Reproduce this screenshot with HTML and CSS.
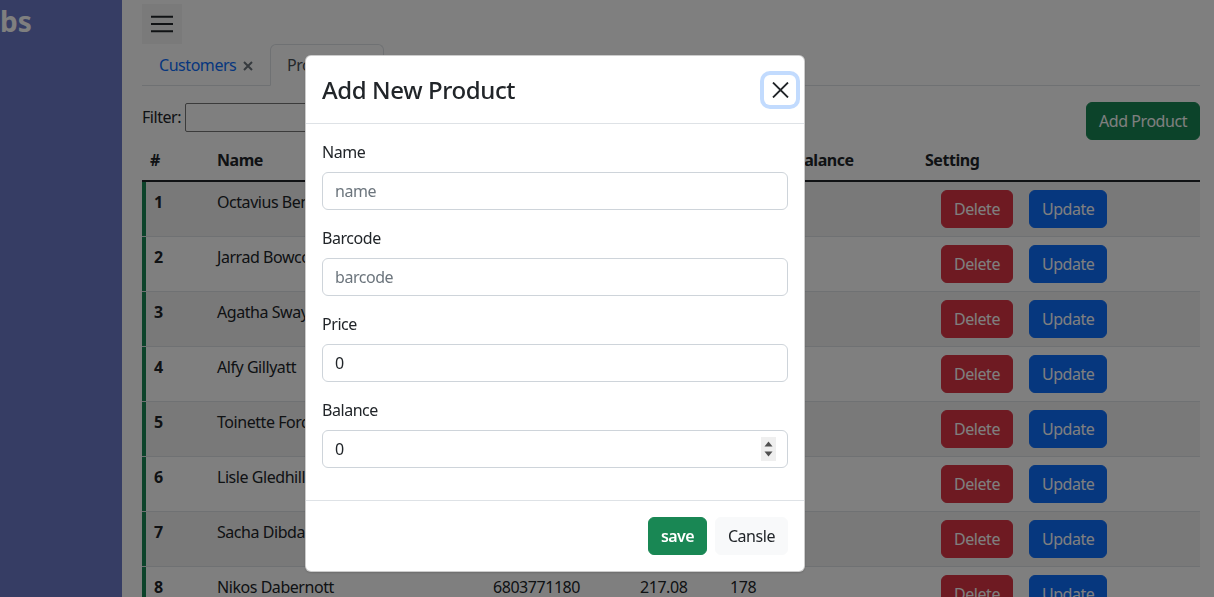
FILE: index.html
```html
<!DOCTYPE html>
<html lang="en">
<head>
<meta charset="utf-8">
<title>Products</title>
<link rel="stylesheet" href="styles.css">
</head>
<body>
<div class="app">
  <aside class="sidebar">
    <div class="brand">bs</div>
  </aside>
  <main class="main">
    <button class="hamburger" type="button" aria-label="menu">
      <svg width="40" height="40" viewBox="0 0 40 40"><path d="M9 12.7H31M9 20H31M9 27.3H31" stroke="#212529" stroke-width="2" fill="none"/></svg>
    </button>
    <ul class="tabs">
      <li class="tab"><a class="tab-link">Customers <svg class="tab-x" width="10" height="10" viewBox="0 0 10 10"><path d="M1 1L9 9M9 1L1 9" stroke="#6c757d" stroke-width="2"/></svg></a></li>
      <li class="tab"><a class="tab-link active">Products <svg class="tab-x" width="10" height="10" viewBox="0 0 10 10"><path d="M1 1L9 9M9 1L1 9" stroke="#6c757d" stroke-width="2"/></svg></a></li>
    </ul>
    <div class="toolbar">
      <div class="filter">
        <label class="filter-label" for="flt">Filter:</label>
        <input class="filter-input" id="flt" type="text">
      </div>
      <button class="btn btn-success" type="button">Add Product</button>
    </div>
    <table class="table">
      <colgroup>
        <col class="c-num"><col class="c-name"><col class="c-barcode"><col class="c-price"><col class="c-stock"><col class="c-balance"><col>
      </colgroup>
      <thead>
        <tr><th>#</th><th>Name</th><th>Barcode</th><th>Price</th><th>Stock</th><th>Balance</th><th>Setting</th></tr>
      </thead>
      <tbody>
        <tr><th>1</th><td>Octavius Benedek</td><td>4217703391</td><td>145.20</td><td>52</td><td></td><td><button class="btn btn-danger">Delete</button><button class="btn btn-primary">Update</button></td></tr>
        <tr><th>2</th><td>Jarrad Bowcock</td><td>5571882046</td><td>88.45</td><td>310</td><td></td><td><button class="btn btn-danger">Delete</button><button class="btn btn-primary">Update</button></td></tr>
        <tr><th>3</th><td>Agatha Swaysland</td><td>0938145562</td><td>402.10</td><td>17</td><td></td><td><button class="btn btn-danger">Delete</button><button class="btn btn-primary">Update</button></td></tr>
        <tr><th>4</th><td>Alfy Gillyatt</td><td>7731209458</td><td>19.99</td><td>96</td><td></td><td><button class="btn btn-danger">Delete</button><button class="btn btn-primary">Update</button></td></tr>
        <tr><th>5</th><td>Toinette Fordham</td><td>2260931874</td><td>310.55</td><td>204</td><td></td><td><button class="btn btn-danger">Delete</button><button class="btn btn-primary">Update</button></td></tr>
        <tr><th>6</th><td>Lisle Gledhill</td><td>6649027713</td><td>57.30</td><td>61</td><td></td><td><button class="btn btn-danger">Delete</button><button class="btn btn-primary">Update</button></td></tr>
        <tr><th>7</th><td>Sacha Dibdale</td><td>1185736620</td><td>126.80</td><td>143</td><td></td><td><button class="btn btn-danger">Delete</button><button class="btn btn-primary">Update</button></td></tr>
        <tr><th>8</th><td>Nikos Dabernott</td><td>6803771180</td><td>217.08</td><td>178</td><td></td><td><button class="btn btn-danger">Delete</button><button class="btn btn-primary">Update</button></td></tr>
      </tbody>
    </table>
  </main>
</div>

<div class="backdrop"></div>

<div class="modal" role="dialog">
  <div class="modal-header">
    <h4 class="modal-title">Add New Product</h4>
    <button class="btn-close" type="button" aria-label="Close">
      <svg width="17" height="16" viewBox="0 0 17 16"><path d="M1 0.5L16 15.5M16 0.5L1 15.5" stroke="#212529" stroke-width="1.8" fill="none"/></svg>
    </button>
  </div>
  <div class="modal-body">
    <div class="field">
      <label class="form-label">Name</label>
      <input class="form-control" type="text" placeholder="name">
    </div>
    <div class="field">
      <label class="form-label">Barcode</label>
      <input class="form-control" type="text" placeholder="barcode">
    </div>
    <div class="field">
      <label class="form-label">Price</label>
      <input class="form-control" type="text" value="0">
    </div>
    <div class="field">
      <label class="form-label">Balance</label>
      <div class="number-wrap">
        <input class="form-control" type="text" value="0">
        <span class="spin">
          <svg width="15" height="24" viewBox="0 0 15 24"><path d="M3.5 9.5L7.5 4.5L11.5 9.5Z" fill="#505050"/><path d="M3.5 14.5L7.5 19.5L11.5 14.5Z" fill="#505050"/></svg>
        </span>
      </div>
    </div>
  </div>
  <div class="modal-footer">
    <button class="btn btn-save" type="button">save</button>
    <button class="btn btn-light" type="button">Cansle</button>
  </div>
</div>
</body>
</html>
```

FILE: styles.css
```css
* { box-sizing: border-box; }

html, body {
  margin: 0;
  height: 100%;
  overflow: hidden;
}

body {
  font-family: "Noto Sans", "Liberation Sans", sans-serif;
  font-size: 16px;
  line-height: 1.5;
  letter-spacing: -0.45px;
  color: #212529;
  background: #fff;
}

.app {
  display: flex;
  height: 100vh;
}

.sidebar {
  width: 122px;
  flex-shrink: 0;
  background: #6c7ac8;
}

.brand {
  color: #fff;
  font-size: 28px;
  font-weight: 700;
  line-height: 1.2;
  padding-top: 5px;
  letter-spacing: 0;
}

.main {
  flex: 1;
  min-width: 0;
  padding: 4px 14px 0 20px;
}

.hamburger {
  display: block;
  width: 40px;
  height: 40px;
  padding: 0;
  border: none;
  background: #f4f4f4;
}
.hamburger svg { display: block; }

.tabs {
  display: flex;
  list-style: none;
  margin: 0;
  padding: 0;
  border-bottom: 1px solid #dee2e6;
}

.tab { margin-bottom: -1px; }

.tab-link {
  display: flex;
  align-items: center;
  padding: 8px 16px;
  border: 1px solid transparent;
  border-radius: 6px 6px 0 0;
  color: #0d6efd;
  line-height: 24px;
  white-space: pre;
}

.tab-link.active {
  color: #495057;
  background: #fff;
  border-color: #dee2e6 #dee2e6 #fff;
}

.tab-x { margin-left: 3px; margin-top: 1px; }

.toolbar {
  display: flex;
  justify-content: space-between;
  align-items: flex-start;
  margin-top: 16px;
}

.filter {
  display: flex;
  align-items: center;
  height: 30px;
  gap: 4px;
}

.filter-input {
  width: 200px;
  height: 29px;
  border: 1px solid #767676;
  border-radius: 2px;
  font: inherit;
  padding: 1px 2px;
}

.btn {
  display: inline-block;
  font: inherit;
  letter-spacing: inherit;
  line-height: 24px;
  padding: 6px 12px;
  border: 1px solid transparent;
  border-radius: 6px;
  color: #fff;
  cursor: pointer;
}

.btn-success { background: #198754; border-color: #198754; }
.btn-danger { background: #dc3545; border-color: #dc3545; }
.btn-primary { background: #0d6efd; border-color: #0d6efd; }

.table {
  width: 100%;
  table-layout: fixed;
  border-collapse: separate;
  border-spacing: 0;
}

.c-num { width: 67px; }
.c-name { width: 276px; }
.c-barcode { width: 147px; }
.c-price { width: 90px; }
.c-stock { width: 64px; }
.c-balance { width: 131px; }

.table thead th {
  text-align: left;
  font-weight: 700;
  padding: 8px 8px 8px;
  white-space: nowrap;
}

.table tbody th,
.table tbody td {
  text-align: left;
  vertical-align: top;
  padding: 8px;
  border-bottom: 1px solid #dee2e6;
  white-space: nowrap;
  overflow: hidden;
}

.table tbody th { font-weight: 700; padding-left: 12px; box-shadow: inset 4px 0 0 #198754; }

.table tbody tr:first-child th,
.table tbody tr:first-child td { border-top: 2px solid #212529; }

.table tbody tr:nth-child(odd) th,
.table tbody tr:nth-child(odd) td { background: rgba(0, 0, 0, 0.05); }

.table td .btn { margin-left: 16px; }

.backdrop {
  position: fixed;
  inset: 0;
  background: rgba(0, 0, 0, 0.5);
  z-index: 10;
}

.modal {
  position: fixed;
  left: 305px;
  top: 55px;
  width: 500px;
  background: #fff;
  border: 1px solid rgba(0, 0, 0, 0.2);
  border-radius: 6px;
  z-index: 20;
  box-shadow: 0 1px 2px rgba(0, 0, 0, 0.15);
}

.modal-header {
  display: flex;
  align-items: center;
  padding: 16px;
  border-bottom: 1px solid #dee2e6;
}

.modal-title {
  margin: 0;
  font-size: 24px;
  font-weight: 500;
  line-height: 35px;
  letter-spacing: -0.4px;
}

.btn-close {
  margin: -8px -8px -8px auto;
  width: 32px;
  height: 30px;
  padding: 0;
  border: none;
  border-radius: 6px;
  background: #fff;
  box-shadow: 0 0 0 4px rgba(13, 110, 253, 0.25);
  display: flex;
  align-items: center;
  justify-content: center;
}
.btn-close svg { display: block; }

.modal-body { padding: 16px; }

.field { margin-bottom: 16px; }

.form-label {
  display: block;
  margin-bottom: 8px;
  line-height: 24px;
}

.form-control {
  display: block;
  width: 100%;
  height: 38px;
  padding: 6px 12px;
  font: inherit;
  letter-spacing: inherit;
  line-height: 24px;
  color: #212529;
  background: #fff;
  border: 1px solid #ced4da;
  border-radius: 6px;
}

.form-control::placeholder { color: #6c757d; }

.number-wrap { position: relative; }

.spin {
  position: absolute;
  right: 12px;
  top: 7px;
  width: 15px;
  height: 24px;
  background: #efefef;
}
.spin svg { display: block; }

.modal-footer {
  display: flex;
  justify-content: flex-end;
  align-items: center;
  padding: 12px;
  border-top: 1px solid #dee2e6;
}

.modal-footer .btn { margin: 4px; }

.btn-save {
  background: #198754;
  border-color: #198754;
  font-weight: 600;
  letter-spacing: -0.6px;
}

.btn-light {
  background: #f8f9fa;
  border-color: #f8f9fa;
  color: #212529;
}
```
